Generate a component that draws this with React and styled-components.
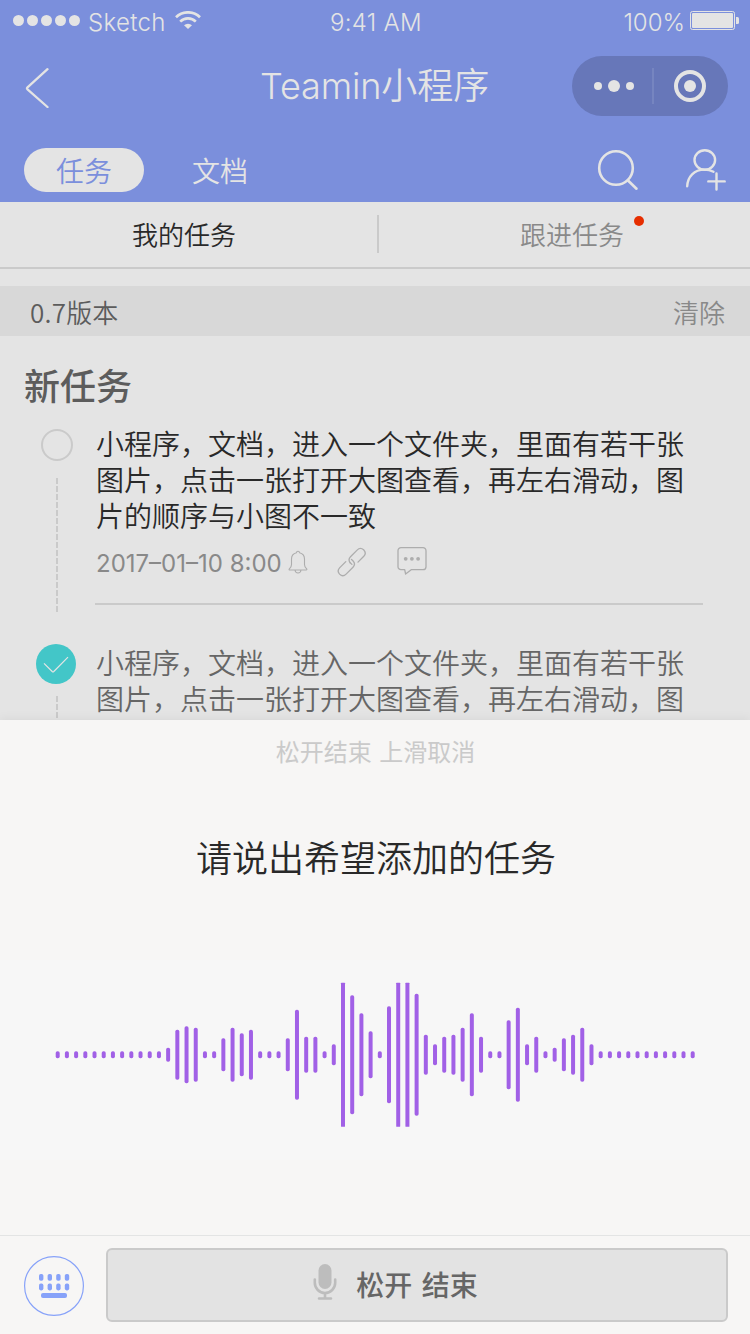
import React from 'react';
import styled, { createGlobalStyle } from 'styled-components';

const GlobalStyle = createGlobalStyle`
  * { box-sizing: border-box; }
  body { margin: 0; background: #e4e4e4; }
`;

const sans = `Inter, 'Noto Sans CJK SC', sans-serif`;
const cjk = `'Noto Sans CJK SC', sans-serif`;

const Screen = styled.div`
  width: 750px;
  height: 1334px;
  overflow: hidden;
  display: flex;
  flex-direction: column;
  background: #e4e4e4;
  font-family: ${sans};
  font-weight: 300;
  svg { display: block; flex: none; }
`;

const Header = styled.header`
  height: 202px;
  flex: none;
  background: #7b8fdc;
  color: #e4e4e4;
`;

const StatusBar = styled.div`
  height: 40px;
  display: grid;
  grid-template-columns: 1fr auto 1fr;
  align-items: start;
  padding: 0 11px 0 13px;
  font-size: 24px;
  font-weight: 350;
  line-height: 46px;
`;

const StatusGroup = styled.div`
  display: flex;
  justify-content: ${(p) => (p.$end ? 'flex-end' : 'flex-start')};
`;

const StatusText = styled.span`
  letter-spacing: ${(p) => p.$spacing || '0'};
  margin: ${(p) => p.$margin || '0'};
`;

const Signal = styled.div`
  display: flex;
  gap: 3px;
  padding-top: 15px;
`;

const SignalDot = styled.i`
  width: 11px;
  height: 11px;
  border-radius: 50%;
  background: #e4e4e4;
`;

const StatusIcon = styled.div`
  padding-top: ${(p) => p.$top}px;
`;

const NavBar = styled.div`
  height: 92px;
  display: grid;
  grid-template-columns: 180px 1fr 180px;
  align-items: center;
  padding: 0 22px 0 24px;
`;

const Title = styled.h1`
  margin: -1px 0 0 -3px;
  text-align: center;
  font-size: 36px;
  font-weight: 350;
  letter-spacing: -0.1px;
  line-height: 52px;
  white-space: nowrap;
`;

const Capsule = styled.div`
  justify-self: end;
  width: 156px;
  height: 60px;
  border-radius: 30px;
  background: #6777b9;
  display: flex;
  align-items: center;
`;

const TabBar = styled.div`
  height: 70px;
  display: flex;
  align-items: center;
  padding: 6px 24px 0;
`;

const Pill = styled.div`
  width: 120px;
  height: 44px;
  border-radius: 22px;
  background: ${(p) => (p.$active ? '#e4e4e4' : 'transparent')};
  color: ${(p) => (p.$active ? '#7b8fdc' : '#e4e4e4')};
  font: 350 28px/44px ${cjk};
  text-align: center;
  margin-right: 16px;
`;

const TabIcons = styled.div`
  margin-left: auto;
  display: flex;
  gap: 45px;
`;

const SubTabs = styled.div`
  height: 67px;
  flex: none;
  display: flex;
  align-items: center;
  border-bottom: 2px solid #cacaca;
`;

const SubTab = styled.div`
  width: ${(p) => p.$width}px;
  display: flex;
  justify-content: center;
  padding-right: ${(p) => p.$inset || 0}px;
  padding-left: ${(p) => p.$lead || 0}px;
  padding-bottom: 2px;
  font: 350 26px/38px ${cjk};
  color: ${(p) => (p.$active ? '#292929' : '#898989')};
`;

const Divider = styled.i`
  width: 2px;
  height: 38px;
  margin-top: -1px;
  background: #cacaca;
`;

const Badge = styled.span`
  position: relative;
  &::after {
    content: '';
    position: absolute;
    right: -20px;
    top: 1px;
    width: 10px;
    height: 10px;
    border-radius: 50%;
    background: #e62e00;
  }
`;

const VersionBar = styled.div`
  height: 50px;
  flex: none;
  margin-top: 17px;
  padding: 0 25px 0 30px;
  background: #d8d8d8;
  display: flex;
  justify-content: space-between;
  font: 350 26px/51px ${cjk};
  color: #5c5c5c;
`;

const Version = styled.span`
  span { letter-spacing: 0.2px; }
`;

const Clear = styled.span`
  color: #898989;
`;

const List = styled.main`
  height: 384px;
  flex: none;
  overflow: hidden;
`;

const SectionTitle = styled.h2`
  margin: 0;
  padding: 21px 0 0 24px;
  font: 500 36px/54px ${cjk};
  color: #5c5c5c;
`;

const Task = styled.article`
  display: flex;
  height: ${(p) => p.$height}px;
  margin-top: ${(p) => p.$top}px;
`;

const Rail = styled.div`
  width: 95px;
  flex: none;
  display: flex;
  flex-direction: column;
`;

const Circle = styled.span`
  width: 32px;
  height: 32px;
  flex: none;
  margin: 4px 0 17px 41px;
  border: 2px solid #cacaca;
  border-radius: 50%;
`;

const DoneCircle = styled.span`
  width: 40px;
  height: 40px;
  flex: none;
  margin: 0 0 12px 36px;
  border-radius: 50%;
  background: #43c6c8;
`;

const Dashes = styled.i`
  width: 2px;
  height: ${(p) => p.$length}px;
  flex: none;
  margin-left: 56px;
  background: repeating-linear-gradient(#cacaca 0 6px, transparent 6px 8px);
`;

const TaskBody = styled.div`
  width: 608px;
  padding-left: 1px;
  border-bottom: ${(p) => (p.$line ? '2px solid #cacaca' : 'none')};
`;

const TaskText = styled.p`
  margin: 0;
  width: 600px;
  font: 350 28px/36px ${cjk};
  color: ${(p) => (p.$done ? '#666666' : '#292929')};
`;

const Meta = styled.div`
  display: flex;
  height: 40px;
  margin-top: 9px;
  font-size: 24px;
  line-height: 44px;
  color: #898989;
`;

const DateText = styled.span`
  width: 192px;
  white-space: nowrap;
  font-weight: 400;
  letter-spacing: 0;
`;

const MetaIcon = styled.span`
  width: ${(p) => p.$width}px;
  padding-top: ${(p) => p.$top}px;
`;

const VoiceSheet = styled.section`
  flex: 1;
  display: flex;
  flex-direction: column;
  align-items: center;
  background: #f7f6f5;
  box-shadow: 0 -1px 10px rgba(0, 0, 0, 0.06);
  z-index: 1;
`;

const Hint = styled.p`
  margin: 13px 0 0 1px;
  font: 400 24px/36px ${cjk};
  word-spacing: 2px;
  color: #cacaca;
`;

const Prompt = styled.p`
  margin: 60px 0 0 2px;
  font: 350 36px/54px ${cjk};
  color: #292929;
`;

const WaveArea = styled.div`
  width: 750px;
  height: 200px;
  margin-top: 77px;
  display: flex;
  align-items: center;
  justify-content: center;
  background: #f7f7f7;
`;

const Composer = styled.footer`
  width: 750px;
  height: 99px;
  margin-top: auto;
  padding: 12px 22px 12px 24px;
  display: flex;
  align-items: center;
  justify-content: space-between;
  border-top: 1px solid #e3e4e4;
`;

const KeyboardToggle = styled.div`
  padding-top: 2px;
`;

const HoldButton = styled.button`
  width: 622px;
  height: 74px;
  padding: 0 44px 2px 0;
  display: flex;
  align-items: center;
  justify-content: center;
  gap: 18px;
  border: 2px solid #cacaca;
  border-radius: 6px;
  background: #e3e3e3;
  font: 500 28px/40px ${cjk};
  word-spacing: 3px;
  color: #666666;
  svg { margin-bottom: 4px; }
`;

const BARS = [
  7, 7, 7, 7, 7, 7, 7, 7, 7, 7, 7, 7, 14, 50, 57, 54, 7, 7, 33, 54, 43, 50, 7, 7, 7,
  33, 90, 36, 36, 7, 21, 144, 119, 83, 47, 7, 97, 144, 144, 122, 40, 21, 36, 40, 54,
  83, 36, 7, 7, 69, 94, 21, 36, 7, 14, 33, 40, 54, 21, 7, 7, 7, 7, 7, 7, 7, 7, 7, 7, 7,
];

const Waveform = () => (
  <svg width="750" height="160" viewBox="0 0 750 160">
    {BARS.map((h, i) => (
      <rect
        key={i}
        x={55.7 + i * 9.203}
        y={74.8 - h / 2}
        width="4"
        height={h}
        rx={h > 140 ? 0.5 : 1.8}
        fill="#a160e6"
      />
    ))}
  </svg>
);

const WifiIcon = () => (
  <svg width="26" height="18" viewBox="0 0 26 18" fill="none" stroke="#e4e4e4" strokeWidth="2.7">
    <path d="M1 6.2a17.2 17.2 0 0 1 24 0" />
    <path d="M5.2 10.6a11.2 11.2 0 0 1 15.6 0" />
    <path d="M9 14.3a5.8 5.8 0 0 1 8 0L13 18z" fill="#e4e4e4" stroke="none" />
  </svg>
);

const BatteryIcon = () => (
  <svg width="49" height="19" viewBox="0 0 49 19">
    <rect x=".5" y=".5" width="44" height="18" rx="2" fill="none" stroke="#e4e4e4" />
    <rect x="2" y="2" width="41" height="15" rx="1" fill="#e4e4e4" />
    <path d="M46 6h1.5a1.5 1.5 0 0 1 1.5 1.5v4a1.5 1.5 0 0 1-1.5 1.5H46z" fill="#e4e4e4" />
  </svg>
);

const BackIcon = () => (
  <svg width="26" height="44" viewBox="0 0 26 44" fill="none" stroke="#e4e4e4" strokeWidth="2.3" strokeLinecap="round" strokeLinejoin="round">
    <path d="M23.5 5.2 3.5 23.3Q2.5 24.3 3.5 25.3L23.5 43" />
  </svg>
);

const CapsuleIcons = () => (
  <svg width="156" height="60" viewBox="0 0 156 60" fill="#e4e4e4">
    <circle cx="26" cy="30" r="4" />
    <circle cx="42" cy="30" r="6" />
    <circle cx="58" cy="30" r="4" />
    <rect x="80" y="12" width="2" height="36" fill="#7685c0" />
    <circle cx="118" cy="30" r="14" fill="none" stroke="#e4e4e4" strokeWidth="4" />
    <circle cx="118" cy="30" r="6" />
  </svg>
);

const SearchIcon = () => (
  <svg width="42" height="42" viewBox="0 0 42 42" fill="none" stroke="#e4e4e4" strokeWidth="2.6" strokeLinecap="round">
    <circle cx="19" cy="19" r="16.8" />
    <path d="m31 31.5 8.5 8.2" />
  </svg>
);

const AddUserIcon = () => (
  <svg width="42" height="42" viewBox="0 0 42 42" fill="none" stroke="#e4e4e4" strokeWidth="2.4" strokeLinecap="round">
    <ellipse cx="20.8" cy="11" rx="10.3" ry="9.7" />
    <path d="M3.2 37.3C3.6 27.5 10.2 20.6 20.5 20.6c3.2 0 6 .6 9 2.2" />
    <path d="M32.5 24.5v16M24.3 32.4h16.4" />
  </svg>
);

const CheckIcon = () => (
  <svg width="40" height="40" viewBox="0 0 40 40" fill="none" stroke="#e4e4e4" strokeWidth="1.2">
    <path d="m8 19.3 8.2 8.2q.8.7 1.6 0L32 13.2" />
  </svg>
);

const BellIcon = () => (
  <svg width="20" height="24" viewBox="0 0 20 24" fill="none" stroke="#adadad" strokeWidth="1.1" strokeLinejoin="round">
    <path d="M8.5 2.7a1.5 1.5 0 0 1 3 0c3.3.8 5 3.1 5 6.3v5.500c0 2.3.8 3 2 4.1.7.8.4 1.4-.4 1.4H1.8c-.8 0-1-.7-.3-1.4 1.2-1.1 2-1.8 2-4.1V9c0-3.2 1.7-5.5 5-6.3zM7 20c.2 1.9 1.4 3 3 3s2.8-1.1 3-3" />
  </svg>
);

const LinkIcon = () => (
  <svg width="30" height="30" viewBox="0 0 30 30" fill="none" stroke="#adadad" strokeWidth="1.3" strokeLinecap="round">
    <path d="M13.2 15.8c-1.7-2.3-1.5-4.3.3-6.1l6.6-6.6c2-2 4.6-2 6.5-.3 2 2 2 4.6.2 6.5l-5.8 5.8" />
    <path d="M8.8 14.6l-6 6c-2 2-2 4.6-.2 6.5 2 2 4.6 1.9 6.5 0l6.9-6.9c1.9-1.9 1.9-4.4-.1-6.5l-1.4-1.2" />
    <path d="M13.2 15.8l1.7 1.6" />
  </svg>
);

const CommentIcon = () => (
  <svg width="30" height="30" viewBox="0 0 30 30" fill="none" stroke="#adadad" strokeWidth="1.3" strokeLinejoin="round">
    <path d="M4 1.7h22a3 3 0 0 1 3 3v16a3 3 0 0 1-3 3H14.2L8.6 28l-.9-4.3H4a3 3 0 0 1-3-3v-16a3 3 0 0 1 3-3z" />
    <g fill="#adadad" stroke="none">
      <circle cx="8.7" cy="12.8" r="1.9" />
      <circle cx="14.9" cy="12.8" r="1.9" />
      <circle cx="21.1" cy="12.8" r="1.9" />
    </g>
  </svg>
);

const KeyboardIcon = () => (
  <svg width="60" height="60" viewBox="0 0 60 60" fill="#87a2f9">
    <circle cx="30" cy="30" r="29.4" fill="none" stroke="#87a2f9" strokeWidth="1.2" />
    {[15, 23.6, 32.2, 40.8].map((x) => (
      <React.Fragment key={x}>
        <rect x={x} y="18" width="4.4" height="6.8" rx="1.8" />
        <rect x={x} y="27.6" width="4.4" height="6.8" rx="1.8" />
      </React.Fragment>
    ))}
    <rect x="17" y="37" width="26" height="5" rx="2" />
  </svg>
);

const MicIcon = () => (
  <svg width="26" height="38" viewBox="0 0 26 38" fill="none" stroke="#bdbdbd" strokeWidth="2.6" strokeLinecap="round">
    <rect x="6.5" y="1" width="13" height="25" rx="6.5" fill="#bdbdbd" stroke="none" />
    <path d="M2.8 16.5v3.3a10.200 10.200 0 0 0 20.400 0v-3.300M13 30v4.500M7 35.500h12" />
  </svg>
);

export default function App() {
  return (
    <Screen>
      <GlobalStyle />
      <Header>
        <StatusBar>
          <StatusGroup>
            <Signal>
              {[0, 1, 2, 3, 4].map((n) => (
                <SignalDot key={n} />
              ))}
            </Signal>
            <StatusText $margin="0 9px 0 8px" $spacing="0.35px">Sketch</StatusText>
            <StatusIcon $top={11}><WifiIcon /></StatusIcon>
          </StatusGroup>
          <StatusText $spacing="0.3px">9:41 AM</StatusText>
          <StatusGroup $end>
            <StatusText $margin="0 5px 0 0">100%</StatusText>
            <StatusIcon $top={11}><BatteryIcon /></StatusIcon>
          </StatusGroup>
        </StatusBar>
        <NavBar>
          <BackIcon />
          <Title>Teamin小程序</Title>
          <Capsule><CapsuleIcons /></Capsule>
        </NavBar>
        <TabBar>
          <Pill $active>任务</Pill>
          <Pill>文档</Pill>
          <TabIcons>
            <SearchIcon />
            <AddUserIcon />
          </TabIcons>
        </TabBar>
      </Header>
      <SubTabs>
        <SubTab $active $width={377} $inset={9}>我的任务</SubTab>
        <Divider />
        <SubTab $width={371} $lead={15}><Badge>跟进任务</Badge></SubTab>
      </SubTabs>
      <VersionBar>
        <Version><span>0.7</span>版本</Version>
        <Clear>清除</Clear>
      </VersionBar>
      <List>
        <SectionTitle>新任务</SectionTitle>
        <Task $top={14} $height={180}>
          <Rail>
            <Circle />
            <Dashes $length={134} />
          </Rail>
          <TaskBody $line>
            <TaskText>小程序，文档，进入一个文件夹，里面有若干张图片，点击一张打开大图查看，再左右滑动，图片的顺序与小图不一致</TaskText>
            <Meta>
              <DateText>2017–01–10 8:00</DateText>
              <MetaIcon $width={49} $top={8}><BellIcon /></MetaIcon>
              <MetaIcon $width={60} $top={5}><LinkIcon /></MetaIcon>
              <MetaIcon $width={30} $top={4}><CommentIcon /></MetaIcon>
            </Meta>
          </TaskBody>
        </Task>
        <Task $top={39} $height={76}>
          <Rail>
            <DoneCircle><CheckIcon /></DoneCircle>
            <Dashes $length={24} />
          </Rail>
          <TaskBody>
            <TaskText $done>小程序，文档，进入一个文件夹，里面有若干张图片，点击一张打开大图查看，再左右滑动，图</TaskText>
          </TaskBody>
        </Task>
      </List>
      <VoiceSheet>
        <Hint>松开结束 上滑取消</Hint>
        <Prompt>请说出希望添加的任务</Prompt>
        <WaveArea><Waveform /></WaveArea>
        <Composer>
          <KeyboardToggle><KeyboardIcon /></KeyboardToggle>
          <HoldButton>
            <MicIcon />
            松开 结束
          </HoldButton>
        </Composer>
      </VoiceSheet>
    </Screen>
  );
}
